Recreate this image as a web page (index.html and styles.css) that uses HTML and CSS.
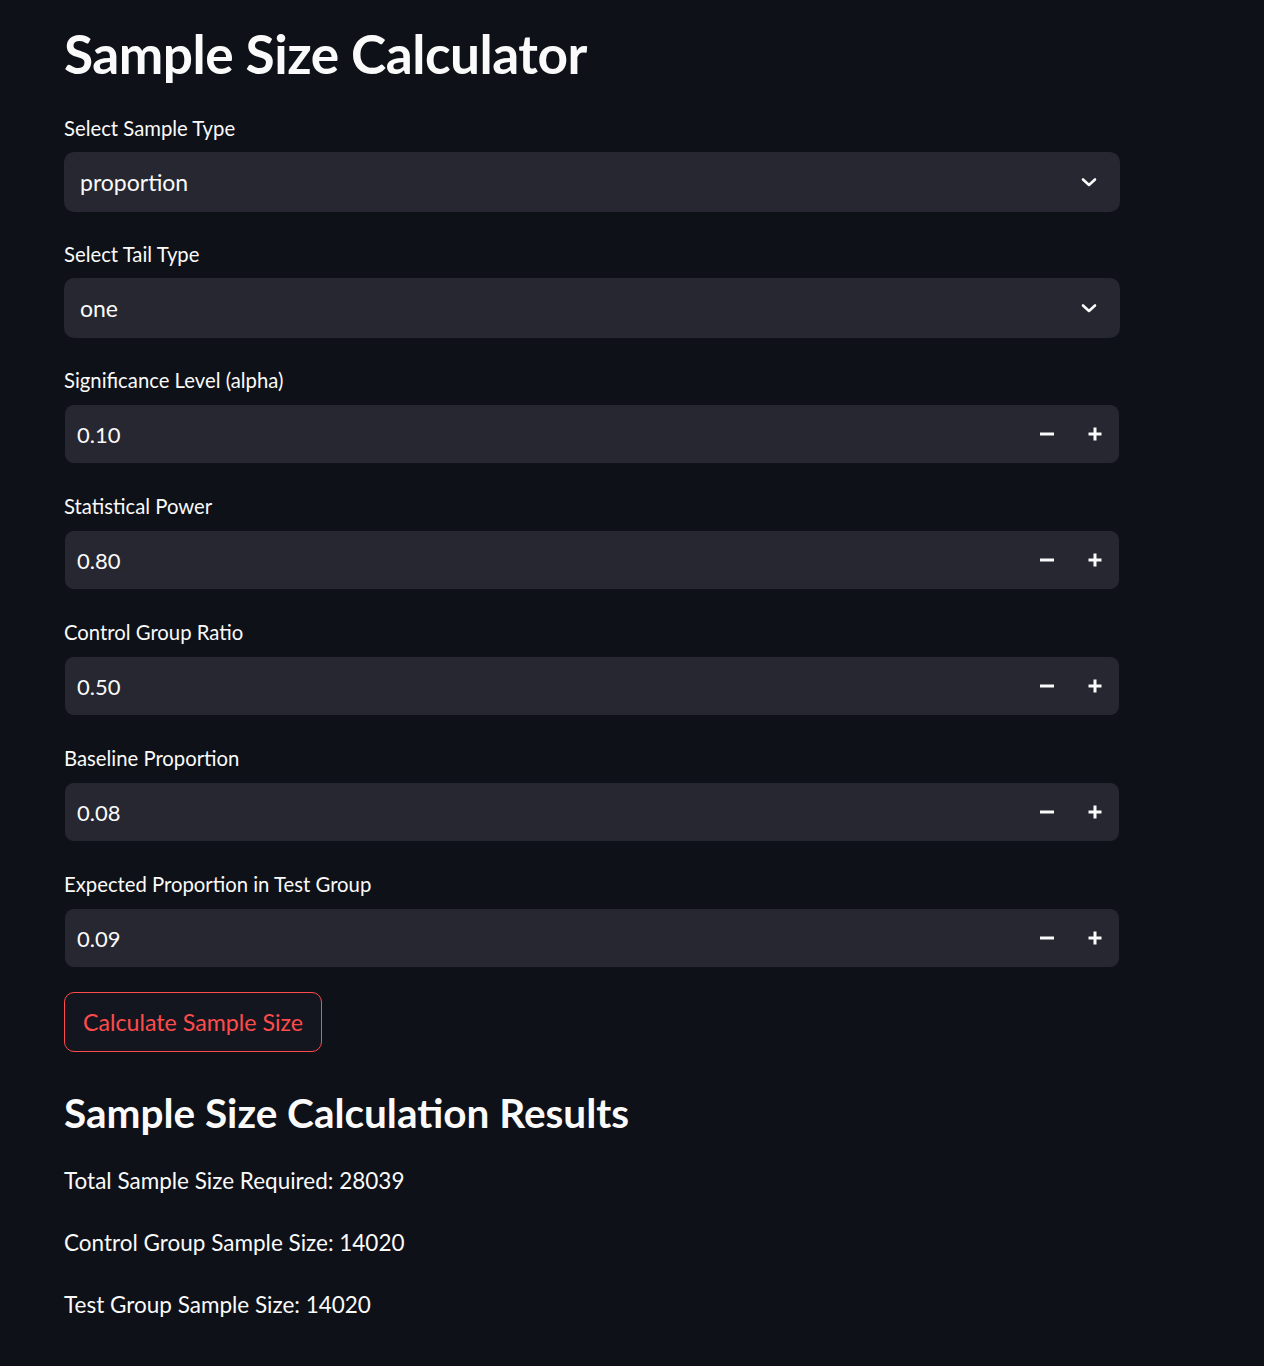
FILE: index.html
```html
<!DOCTYPE html>
<html lang="en">
<head>
<meta charset="utf-8">
<title>Sample Size Calculator</title>
<link rel="stylesheet" href="styles.css">
</head>
<body>
<main class="app">
  <h1 class="title">Sample Size Calculator</h1>

  <div class="field">
    <label class="label">Select Sample Type</label>
    <div class="select"><span class="value">proportion</span>
      <svg class="chev" width="20" height="20" viewBox="0 0 20 20"><path d="M4 7.5 L10 13 L16 7.5" fill="none" stroke="#fafafa" stroke-width="2.6" stroke-linecap="round" stroke-linejoin="round"/></svg>
    </div>
  </div>

  <div class="field">
    <label class="label">Select Tail Type</label>
    <div class="select"><span class="value">one</span>
      <svg class="chev" width="20" height="20" viewBox="0 0 20 20"><path d="M4 7.5 L10 13 L16 7.5" fill="none" stroke="#fafafa" stroke-width="2.6" stroke-linecap="round" stroke-linejoin="round"/></svg>
    </div>
  </div>

  <div class="field">
    <label class="label">Significance Level (alpha)</label>
    <div class="number"><span class="num-value">0.10</span>
      <span class="step"><svg width="16" height="16" viewBox="0 0 16 16"><path d="M1 8 H15" stroke="#fafafa" stroke-width="3"/></svg></span>
      <span class="step"><svg width="16" height="16" viewBox="0 0 16 16"><path d="M1.5 8 H14.5 M8 1.5 V14.5" stroke="#fafafa" stroke-width="3"/></svg></span>
    </div>
  </div>

  <div class="field">
    <label class="label">Statistical Power</label>
    <div class="number"><span class="num-value">0.80</span>
      <span class="step"><svg width="16" height="16" viewBox="0 0 16 16"><path d="M1 8 H15" stroke="#fafafa" stroke-width="3"/></svg></span>
      <span class="step"><svg width="16" height="16" viewBox="0 0 16 16"><path d="M1.5 8 H14.5 M8 1.5 V14.5" stroke="#fafafa" stroke-width="3"/></svg></span>
    </div>
  </div>

  <div class="field">
    <label class="label">Control Group Ratio</label>
    <div class="number"><span class="num-value">0.50</span>
      <span class="step"><svg width="16" height="16" viewBox="0 0 16 16"><path d="M1 8 H15" stroke="#fafafa" stroke-width="3"/></svg></span>
      <span class="step"><svg width="16" height="16" viewBox="0 0 16 16"><path d="M1.5 8 H14.5 M8 1.5 V14.5" stroke="#fafafa" stroke-width="3"/></svg></span>
    </div>
  </div>

  <div class="field">
    <label class="label">Baseline Proportion</label>
    <div class="number"><span class="num-value">0.08</span>
      <span class="step"><svg width="16" height="16" viewBox="0 0 16 16"><path d="M1 8 H15" stroke="#fafafa" stroke-width="3"/></svg></span>
      <span class="step"><svg width="16" height="16" viewBox="0 0 16 16"><path d="M1.5 8 H14.5 M8 1.5 V14.5" stroke="#fafafa" stroke-width="3"/></svg></span>
    </div>
  </div>

  <div class="field">
    <label class="label">Expected Proportion in Test Group</label>
    <div class="number"><span class="num-value">0.09</span>
      <span class="step"><svg width="16" height="16" viewBox="0 0 16 16"><path d="M1 8 H15" stroke="#fafafa" stroke-width="3"/></svg></span>
      <span class="step"><svg width="16" height="16" viewBox="0 0 16 16"><path d="M1.5 8 H14.5 M8 1.5 V14.5" stroke="#fafafa" stroke-width="3"/></svg></span>
    </div>
  </div>

  <button class="btn" type="button">Calculate Sample Size</button>

  <h2 class="subtitle">Sample Size Calculation Results</h2>
  <p class="result">Total Sample Size Required: 28039</p>
  <p class="result">Control Group Sample Size: 14020</p>
  <p class="result">Test Group Sample Size: 14020</p>
</main>
</body>
</html>
```

FILE: styles.css
```css
html, body {
  margin: 0;
  padding: 0;
  background: #0e1117;
  color: #fafafa;
  font-family: "Lato", "Noto Sans", sans-serif;
}

.app {
  width: 1056px;
  margin-left: 64px;
  padding-top: 24px;
  display: flex;
  flex-direction: column;
}

.title {
  margin: 0 0 34px 0;
  font-size: 53.2px;
  font-weight: 700;
  line-height: 58px;
  letter-spacing: -0.5px;
}

.field {
  display: flex;
  flex-direction: column;
  margin-bottom: 30px;
}

.label {
  font-size: 20.3px;
  line-height: 24px;
  height: 24px;
  margin-bottom: 12px;
}

.select {
  height: 60px;
  box-sizing: border-box;
  background: #262730;
  border-radius: 10px;
  display: flex;
  align-items: center;
  padding: 0 21px 0 16px;
}

.value {
  flex: 1;
  font-size: 23px;
}

.chev {
  display: block;
}

.number {
  height: 60px;
  box-sizing: border-box;
  background: #262730;
  border: 1px solid #0e1117;
  border-radius: 10px;
  display: flex;
  align-items: center;
  padding: 0 0 0 12px;
}

.num-value {
  flex: 1;
  font-size: 22px;
}

.step {
  width: 48px;
  height: 58px;
  display: flex;
  align-items: center;
  justify-content: center;
}

.btn {
  align-self: flex-start;
  margin-top: -6px;
  height: 60px;
  padding: 0 18px;
  background: #13161e;
  border: 1px solid #ff4b4b;
  border-radius: 10px;
  color: #ff4b4b;
  font-family: inherit;
  font-size: 23.2px;
}

.subtitle {
  margin: 36px 0 29px 0;
  font-size: 40.5px;
  line-height: 50px;
  font-weight: 700;
}

.result {
  margin: 0 0 34px 0;
  font-size: 22.5px;
  line-height: 28px;
}
```
